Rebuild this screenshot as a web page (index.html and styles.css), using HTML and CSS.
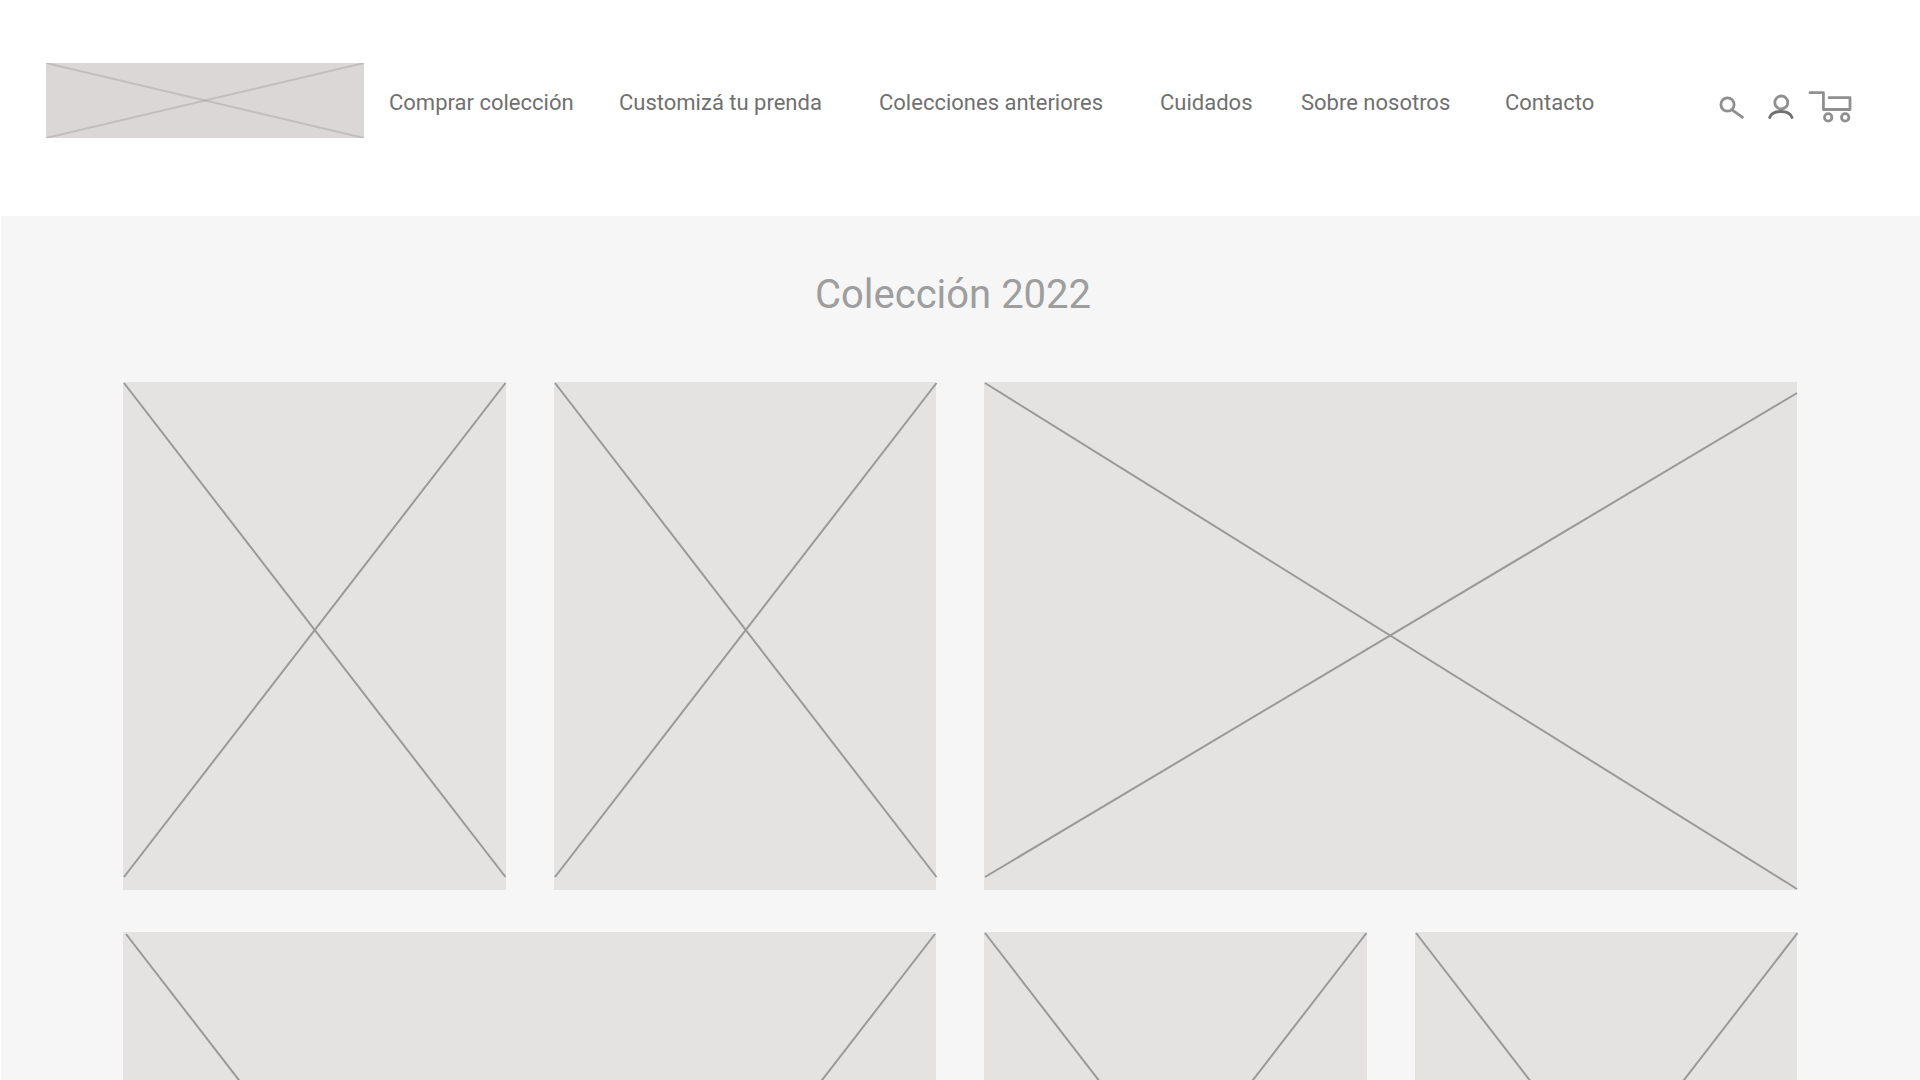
FILE: index.html
```html
<!DOCTYPE html>
<html lang="es">
<head>
<meta charset="utf-8">
<meta name="viewport" content="width=device-width, initial-scale=1">
<title>Colección 2022</title>
<link rel="stylesheet" href="styles.css">
</head>
<body>
<header class="header">
  <a class="logo" href="#" aria-label="Inicio">
    <svg class="cross" viewBox="0 0 318 75" preserveAspectRatio="none"><path d="M0 0L318 75"/><path d="M0 75L318 0"/></svg>
  </a>
  <nav class="nav">
    <a href="#">Comprar colección</a>
    <a href="#">Customizá tu prenda</a>
    <a href="#">Colecciones anteriores</a>
    <a href="#">Cuidados</a>
    <a href="#">Sobre nosotros</a>
    <a href="#">Contacto</a>
  </nav>
  <div class="actions">
    <button class="action" type="button" aria-label="Buscar">
      <svg width="40" height="39" viewBox="0 0 40 39"><circle cx="11.5" cy="23.5" r="6.6"/><path d="M16.8 29.3L26.5 36.3"/></svg>
    </button>
    <button class="action" type="button" aria-label="Cuenta">
      <svg width="40" height="39" viewBox="0 0 40 39"><circle cx="19.3" cy="21.5" r="6.5"/><path class="shoulders" d="M7.7 36.5C9 32.5 13 30.5 19 30.5S28.5 32.5 30 36.5"/></svg>
    </button>
    <button class="action" type="button" aria-label="Carrito">
      <svg width="48" height="39" viewBox="0 0 48 39"><path d="M2 11.7H15.4V28.500H42V16.600H21"/><circle cx="20.2" cy="36.4" r="3.7"/><circle cx="37.2" cy="36.4" r="3.7"/></svg>
    </button>
  </div>
</header>
<main class="collection">
  <h1 class="title">Colección 2022</h1>
  <div class="grid">
    <a class="tile" href="#" aria-label="Prenda 1"><svg class="cross" viewBox="0 0 382 508" preserveAspectRatio="none"><path d="M1 1L382 495"/><path d="M1 495L382 1"/></svg></a>
    <a class="tile" href="#" aria-label="Prenda 2"><svg class="cross" viewBox="0 0 382 508" preserveAspectRatio="none"><path d="M1 1L382 495"/><path d="M1 495L382 1"/></svg></a>
    <a class="tile wide" href="#" aria-label="Prenda 3"><svg class="cross" viewBox="0 0 813 508" preserveAspectRatio="none"><path d="M1 1L813 507"/><path d="M1 495L813 11"/></svg></a>
    <a class="tile wide" href="#" aria-label="Prenda 4"><svg class="cross" viewBox="0 0 813 508" preserveAspectRatio="none"><path d="M3 2L385 496"/><path d="M812 2L430 496"/></svg></a>
    <a class="tile" href="#" aria-label="Prenda 5"><svg class="cross" viewBox="0 0 382 508" preserveAspectRatio="none"><path d="M1 1L382 495"/><path d="M1 495L382 1"/></svg></a>
    <a class="tile" href="#" aria-label="Prenda 6"><svg class="cross" viewBox="0 0 382 508" preserveAspectRatio="none"><path d="M1 1L382 495"/><path d="M1 495L382 1"/></svg></a>
  </div>
</main>
</body>
</html>
```
FILE: styles.css
```css
* {
  box-sizing: border-box;
}

body {
  display: flex;
  flex-direction: column;
  height: 100vh;
  margin: 0;
  overflow: hidden;
  background: #fff;
  font-family: Roboto, sans-serif;
}

.header {
  display: flex;
  flex: none;
  align-items: center;
  padding: 63px 64px 78px 46px;
}

.logo {
  flex: none;
  width: 318px;
  height: 75px;
  background: #dbd7d6;
}

.cross {
  display: block;
  width: 100%;
  height: 100%;
  overflow: visible;
  fill: none;
  stroke: #999;
  stroke-width: 2px;
}

.cross path {
  vector-effect: non-scaling-stroke;
}

.logo .cross {
  overflow: hidden;
  stroke: #a8a8a6;
  stroke-opacity: 0.5;
}

.nav {
  display: grid;
  flex: 1;
  grid-template-columns: 230fr 260fr 281fr 141fr 204fr 211fr;
  padding-top: 4px;
  margin-left: 25px;
}

.nav a {
  color: #707070;
  font-size: 22px;
  line-height: 27px;
  text-decoration: none;
  white-space: nowrap;
}

.actions {
  display: flex;
  flex: none;
  gap: 6px;
}

.action {
  padding: 0;
  border: 0;
  background: none;
  cursor: pointer;
}

.action svg {
  display: block;
  overflow: visible;
  fill: none;
  stroke: #8f8f8f;
  stroke-width: 2.8px;
  stroke-linecap: round;
  stroke-linejoin: round;
}

.action .shoulders {
  stroke: #707070;
}

.collection {
  flex: 1;
  min-height: 0;
  margin-left: 1px;
  padding: 55px 123px 0 122px;
  overflow: hidden;
  background: #f6f6f6;
}

.title {
  margin: 0 0 63px;
  padding-right: 14px;
  color: #9e9e9e;
  font-size: 40px;
  font-weight: 400;
  line-height: 48px;
  text-align: center;
}

.grid {
  display: grid;
  grid-template-columns: repeat(4, 1fr);
  grid-auto-rows: 508px;
  gap: 42px 48px;
}

.tile {
  background: #e4e3e1;
}

.wide {
  grid-column: span 2;
}
```
